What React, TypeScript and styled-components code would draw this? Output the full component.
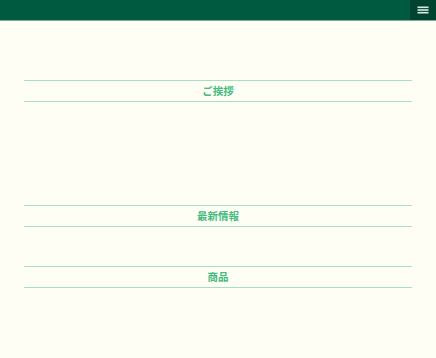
import React from "react";
import styled, { createGlobalStyle } from "styled-components";

const GlobalStyle = createGlobalStyle`
  html, body {
    margin: 0;
    padding: 0;
    background: #fefef5;
    font-family: "Noto Sans CJK JP", "Noto Sans", sans-serif;
  }
`;

const Page = styled.div`
  min-height: 358px;
  background: #fefef5;
`;

const Header = styled.header`
  display: flex;
  justify-content: flex-end;
  height: 20px;
  background: #005a40;
  border-bottom: 1px solid #7fa998;
`;

const MenuButton = styled.button`
  width: 26px;
  height: 20px;
  padding: 0;
  border: none;
  background: #00432f;
  display: flex;
  align-items: center;
  justify-content: center;
  cursor: pointer;
`;

const Main = styled.main`
  padding: 20px 24px 0;
`;

const Section = styled.section<{ contentHeight?: number }>`
  margin-top: 39px;
  padding-bottom: ${(p) => p.contentHeight ?? 0}px;
`;

const SectionTitle = styled.h2`
  margin: 0;
  height: 20px;
  line-height: 20px;
  text-align: center;
  font-size: 10.5px;
  font-weight: 700;
  color: #45bb7f;
  border-top: 1px solid #a7e0c5;
  border-bottom: 1px solid #a7e0c5;
`;

const MenuIcon = () => (
  <svg width="12" height="10" viewBox="0 0 12 10">
    <rect x="0.5" y="1.5" width="11" height="1.6" fill="#d9e9e1" />
    <rect x="0.5" y="4.2" width="11" height="1.6" fill="#d9e9e1" />
    <rect x="0.5" y="6.9" width="11" height="1.6" fill="#d9e9e1" />
  </svg>
);

const sections = [
  { key: "greeting", title: "ご挨拶", height: 64 },
  { key: "news", title: "最新情報", height: 0 },
  { key: "products", title: "商品", height: 0 },
];

const App: React.FC = () => {
  return (
    <Page>
      <GlobalStyle />
      <Header>
        <MenuButton aria-label="menu">
          <MenuIcon />
        </MenuButton>
      </Header>
      <Main>
        {sections.map((s) => (
          <Section key={s.key} contentHeight={s.height}>
            <SectionTitle>{s.title}</SectionTitle>
          </Section>
        ))}
      </Main>
    </Page>
  );
};

export default App;
